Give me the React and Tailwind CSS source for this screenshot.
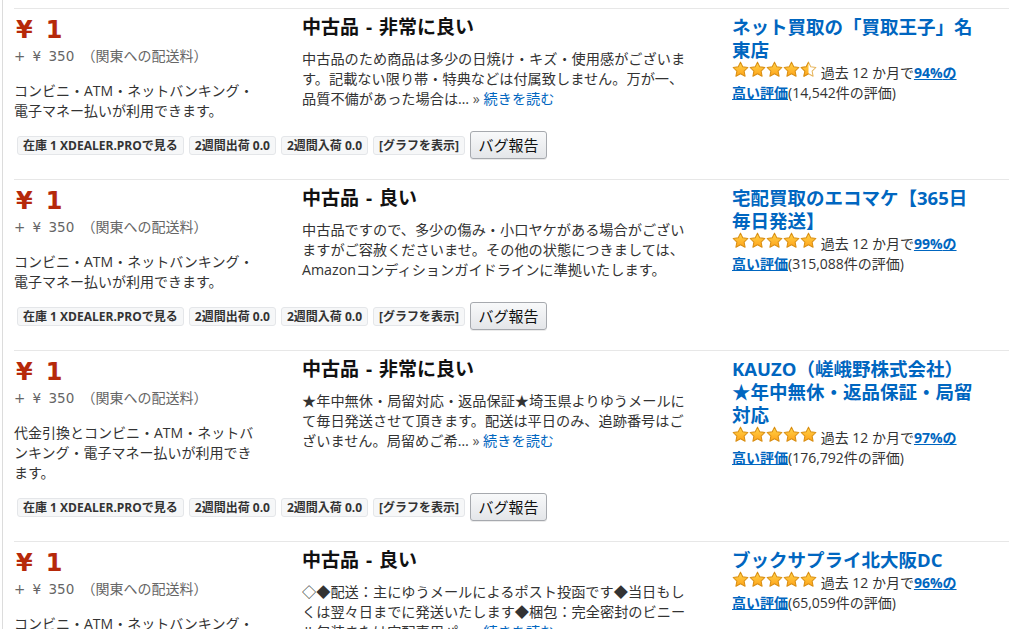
import React, { useId } from 'react';

const offers = [
  {
    payment: 'コンビニ・ATM・ネットバンキング・電子マネー払いが利用できます。',
    condition: '中古品 - 非常に良い',
    note: '中古品のため商品は多少の日焼け・キズ・使用感がございます。記載ない限り帯・特典などは付属致しません。万が一、品質不備があった場合は…',
    more: true,
    seller: ['ネット買取の「買取王子」名', '東店'],
    rating: 4.5,
    percent: '94%',
    count: '14,542',
  },
  {
    payment: 'コンビニ・ATM・ネットバンキング・電子マネー払いが利用できます。',
    condition: '中古品 - 良い',
    note: '中古品ですので、多少の傷み・小口ヤケがある場合がございますがご容赦くださいませ。その他の状態につきましては、Amazonコンディションガイドラインに準拠いたします。',
    more: false,
    seller: ['宅配買取のエコマケ【365日', '毎日発送】'],
    rating: 5,
    percent: '99%',
    count: '315,088',
  },
  {
    payment: '代金引換とコンビニ・ATM・ネットバンキング・電子マネー払いが利用できます。',
    condition: '中古品 - 非常に良い',
    note: '★年中無休・局留対応・返品保証★埼玉県よりゆうメールにて毎日発送させて頂きます。配送は平日のみ、追跡番号はございません。局留めご希…',
    more: true,
    seller: ['KAUZO（嵯峨野株式会社）', '★年中無休・返品保証・局留', '対応'],
    rating: 5,
    percent: '97%',
    count: '176,792',
  },
  {
    payment: 'コンビニ・ATM・ネットバンキング・電子マネー払いが利用できます。',
    condition: '中古品 - 良い',
    note: '◇◆配送：主にゆうメールによるポスト投函です◆当日もしくは翌々日までに発送いたします◆梱包：完全密封のビニール包装または宅配専用パ…',
    more: true,
    seller: ['ブックサプライ北大阪DC'],
    rating: 5,
    percent: '96%',
    count: '65,059',
  },
];

const STAR = 'M10 1.3l2.65 5.55 6.05.8-4.45 4.2 1.15 6.05L10 14.95 4.6 17.9l1.15-6.05L1.3 7.65l6.05-.8z';

function Star({ half }) {
  const id = useId().replace(/:/g, '');
  return (
    <svg viewBox="0 0 20 20" className="inline-block h-[17px] w-[17px] align-[-3px]">
      <defs>
        <linearGradient id={`g${id}`} x1="0" y1="0" x2="0" y2="1">
          <stop offset="0" stopColor="#ffd54a" />
          <stop offset="1" stopColor="#ffa31a" />
        </linearGradient>
        <clipPath id={`c${id}`}>
          <rect x="0" y="0" width="10" height="20" />
        </clipPath>
      </defs>
      {half ? (
        <>
          <path d={STAR} fill="#fff" stroke="#e6b45c" strokeWidth="1.2" strokeLinejoin="round" />
          <path d={STAR} fill={`url(#g${id})`} stroke="#d98e12" strokeWidth="1.2" strokeLinejoin="round" clipPath={`url(#c${id})`} />
        </>
      ) : (
        <path d={STAR} fill={`url(#g${id})`} stroke="#d98e12" strokeWidth="1.2" strokeLinejoin="round" />
      )}
    </svg>
  );
}

function Stars({ rating }) {
  return (
    <span className="inline-flex">
      {[1, 2, 3, 4, 5].map((n) => (
        <Star key={n} half={rating < n} />
      ))}
    </span>
  );
}

function Badge({ children }) {
  return (
    <span className="h-[19px] rounded-[3px] border border-[#e4e6e9] bg-[#f6f7f8] px-[5px] text-[12px] leading-[17px] font-bold whitespace-nowrap text-[#333]">
      {children}
    </span>
  );
}

function OfferRow({ offer }) {
  return (
    <div className="flex border-t border-[#e7e7e7] pt-[6px] pb-[20px]">
      {/* left: price + condition + tools */}
      <div className="flex w-[718px] flex-col">
        <div className="flex items-start">
          <div className="w-[288px]">
            <div className="flex pl-[2px] font-['DejaVu_Sans',sans-serif] text-[24px] leading-[30px] font-bold text-[#b6290a]">
              <span>¥</span>
              <span className="ml-[13px]">1</span>
            </div>
            <div className="mt-[1px] text-[14px] leading-[20px] text-[#666]">
              <span className="font-['DejaVu_Sans',sans-serif] text-[13.5px] [word-spacing:3px]">+ ¥ 350 </span>（関東への配送料）
            </div>
            <p className="mt-[15px] w-[246px] text-[14px] leading-[20px] text-[#333]">{offer.payment}</p>
          </div>
          <div className="w-[390px]">
            <h3 className="text-[19px] leading-[24px] font-bold text-[#111] [word-spacing:2px]">{offer.condition}</h3>
            <p className="mt-[10px] w-[388px] text-[14.2px] leading-[20px] text-[#333]">
              {offer.note}
              {offer.more && (
                <>
                  {' '}<span className="text-[#555]">»</span>{' '}
                  <a className="text-[#0066c0]">続きを読む</a>
                </>
              )}
            </p>
          </div>
        </div>
        <div className="mt-[10px] ml-[3px] flex items-center gap-[5px]">
          <Badge>在庫 1 XDEALER.PROで見る</Badge>
          <Badge>2週間出荷 0.0</Badge>
          <Badge>2週間入荷 0.0</Badge>
          <Badge>[グラフを表示]</Badge>
          <button className="h-[28px] w-[77px] rounded-[3px] border border-[#a6a9ae] bg-gradient-to-b from-[#f8f9fa] to-[#e4e6e9] text-center text-[15px] leading-[26px] text-[#111] shadow-[0_1px_0_rgba(0,0,0,0.08)]">
            バグ報告
          </button>
        </div>
      </div>

      {/* right: seller */}
      <div className="w-[270px]">
        <div className="text-[18.5px] leading-[23px] font-bold text-[#0066c0]">
          {offer.seller.map((line, i) => (
            <div key={i}>{line}</div>
          ))}
        </div>
        <div className="text-[14px] leading-[20px] text-[#333]">
          <Stars rating={offer.rating} /> 過去 12 か月で
          <a className="font-bold text-[#0066c0] underline">
            {offer.percent}の<br />高い評価
          </a>
          ({offer.count}件の評価)
        </div>
      </div>
    </div>
  );
}

export default function App() {
  return (
    <div className="h-[629px] w-[1009px] overflow-hidden bg-white font-['Open_Sans','Noto_Sans_CJK_JP',sans-serif]">
      <div className="ml-[2px] h-full border-l border-[#dcdcdc] pt-[8px] pl-[11px]">
        {offers.map((offer, i) => (
          <OfferRow key={i} offer={offer} />
        ))}
      </div>
    </div>
  );
}
